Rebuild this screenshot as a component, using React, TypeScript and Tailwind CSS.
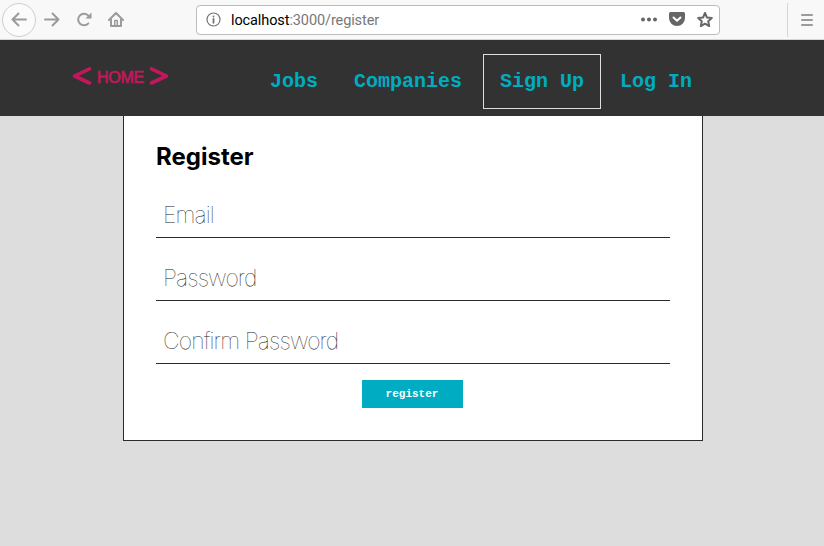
import React from "react";

const stroke = {
  fill: "none",
  strokeLinecap: "round" as const,
  strokeLinejoin: "round" as const,
};

function BrowserBar() {
  return (
    <div className="flex h-10 items-center border-b border-[#d6d6d6] bg-[#f8f8f8] font-['Roboto',sans-serif]">
      <div className="flex w-[196px] shrink-0 items-center pl-[2px]">
        <button className="flex size-[34px] items-center justify-center rounded-full border border-[#cfcdd1] bg-[#fbfbfb]">
          <svg width="16" height="16" viewBox="0 0 16 16" stroke="#9b9b9b" strokeWidth="2" {...stroke}>
            <path d="M15 7.500H1.500M7.500 1.500l-6 6 6 6" />
          </svg>
        </button>
        <svg className="ml-2" width="16" height="16" viewBox="0 0 16 16" stroke="#9b9b9b" strokeWidth="2" {...stroke}>
          <path d="M1 7.500h13.500M8.500 1.500l6 6-6 6" />
        </svg>
        <svg className="ml-4" width="16" height="16" viewBox="0 0 16 16" stroke="#9b9b9b" strokeWidth="2" {...stroke}>
          <path d="M12.300 11.400A5.800 5.800 0 1 1 12 3.400L14 5.200" />
          <path d="M15.500 .5v6H9.500z" fill="#9b9b9b" stroke="none" />
        </svg>
        <svg className="ml-4" width="16" height="16" viewBox="0 0 16 16" stroke="#9b9b9b" strokeWidth="2" {...stroke}>
          <path d="M1 8 8 1l7 7M3 7.500v6.500h10V7.500" />
          <path d="M6.800 14V8.500h2.500V14" strokeWidth="1.500" />
        </svg>
      </div>
      <div className="flex h-[30px] w-[524px] shrink-0 items-center rounded-[4px] border border-[#bdbbbe] bg-white pl-[9px]">
        <svg width="15" height="15" viewBox="0 0 15 15" stroke="#737373" strokeWidth="1.200" {...stroke}>
          <circle cx="7.500" cy="7.500" r="6.500" />
          <path d="M7.500 7v3.800M7.500 4.400v.2" strokeWidth="1.800" />
        </svg>
        <span className="mt-[2px] ml-[10px] text-[14.500px] leading-[18px] tracking-[-0.100px] text-[#777]">
          <span className="text-black">localhost</span>:3000/register
        </span>
        <svg className="ml-auto" width="16" height="16" viewBox="0 0 16 16" fill="#666">
          <circle cx="2" cy="7.500" r="2" />
          <circle cx="8" cy="7.500" r="2" />
          <circle cx="14" cy="7.500" r="2" />
        </svg>
        <svg className="ml-3" width="16" height="16" viewBox="0 0 16 16">
          <path d="M1.500 0h13A1.500 1.500 0 0 1 16 1.500V6A8 8 0 0 1 0 6V1.500A1.500 1.500 0 0 1 1.500 0z" fill="#666" />
          <path d="m4.500 5.500 3.500 3.300 3.500-3.300" stroke="#fff" strokeWidth="2" {...stroke} />
        </svg>
        <svg className="ml-3 mr-[6px]" width="16" height="16" viewBox="0 0 16 16" stroke="#666" strokeWidth="2" {...stroke}>
          <path d="m8 1 1.900 4.400 4.900.5-3.600 3.300 1 4.900L8 11.700l-4.200 2.400 1-4.900L1.200 5.900l4.900-.5z" />
        </svg>
      </div>
      <div className="ml-auto flex h-[34px] w-[37px] items-center border-l border-[#d5d5d5] pl-[13px]">
        <svg width="12" height="12" viewBox="0 0 12 12" stroke="#9b9b9b" strokeWidth="2" {...stroke}>
          <path d="M1 1h10M1 6h10M1 11h10" />
        </svg>
      </div>
    </div>
  );
}

function NavLink({ label, active = false }: { label: string; active?: boolean }) {
  return (
    <a className={`flex h-[55px] items-center border px-4 ${active ? "ml-[2px] border-[#dedede]" : "border-transparent"}`}>
      {label}
    </a>
  );
}

function Header() {
  return (
    <header className="flex h-[76px] items-start bg-[#323232]">
      <a className="ml-[72px] mt-[26px] flex h-5 w-[97px] items-center justify-between text-[#c2185b]">
        <svg width="20" height="20" viewBox="0 0 20 20" stroke="currentColor" strokeWidth="3.600" {...stroke}>
          <path d="M17.500 2.800 2.500 10l15 7" />
        </svg>
        <span className="mt-[3px] font-['Liberation_Sans',Arial,sans-serif] text-[16px] leading-5 tracking-[-0.300px] [-webkit-text-stroke:0.700px_#c2185b]">HOME</span>
        <svg width="20" height="20" viewBox="0 0 20 20" stroke="currentColor" strokeWidth="3.600" {...stroke}>
          <path d="m2.500 2.800 15 7.200-15 7" />
        </svg>
      </a>
      <nav className="ml-[84px] mt-[14px] flex gap-[2px] font-['Liberation_Mono','Courier_New',monospace] text-[20px] font-bold whitespace-nowrap text-[#00acc1]">
        <NavLink label="Jobs" />
        <NavLink label="Companies" />
        <NavLink label="Sign Up" active />
        <NavLink label="Log In" />
      </nav>
    </header>
  );
}

function Field({ label, type = "text" }: { label: string; type?: string }) {
  return (
    <input
      type={type}
      placeholder={label}
      className="mb-[15px] block h-12 w-full border-b border-[#2b2b2b] bg-transparent px-[7px] pt-[2px] font-['Inter',sans-serif] text-[23px] font-thin tracking-[-0.900px] outline-none placeholder:text-[#222] placeholder:opacity-100"
    />
  );
}

export default function App() {
  return (
    <div className="flex h-[546px] w-[824px] flex-col overflow-hidden bg-[#dddddd]">
      <BrowserBar />
      <Header />
      <form className="ml-[123px] flex h-[325px] w-[580px] flex-col border border-t-0 border-[#2b2b2b] bg-white px-8 pt-[25px]">
        <h1 className="mb-[18px] font-['Inter',sans-serif] text-[24px] leading-[31px] font-bold text-black">Register</h1>
        <Field label="Email" />
        <Field label="Password" type="password" />
        <Field label="Confirm Password" type="password" />
        <button type="button" className="mt-px mr-[2px] h-7 w-[101px] self-center bg-[#00acc1] font-['Liberation_Mono','Courier_New',monospace] text-[11px] font-bold text-white">
          register
        </button>
      </form>
    </div>
  );
}
